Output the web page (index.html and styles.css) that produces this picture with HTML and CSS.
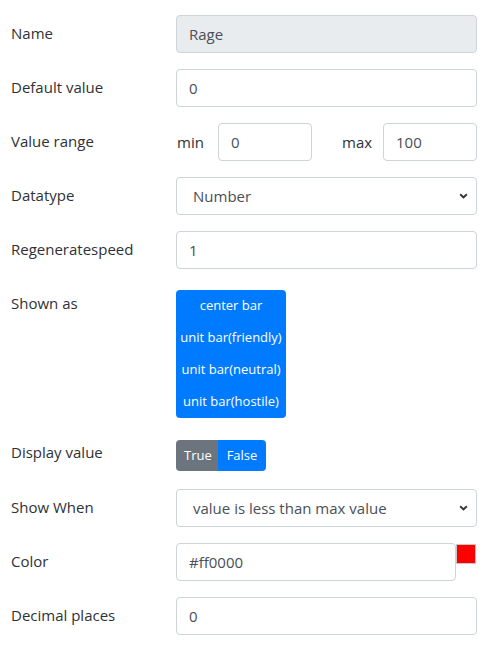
FILE: index.html
```html
<!DOCTYPE html>
<html>
<head>
<meta charset="utf-8">
<link rel="stylesheet" href="styles.css">
</head>
<body>
<div class="form">
  <div class="row">
    <label class="label">Name</label>
    <div class="field"><div class="input readonly">Rage</div></div>
  </div>
  <div class="row">
    <label class="label">Default value</label>
    <div class="field"><div class="input">0</div></div>
  </div>
  <div class="row">
    <label class="label">Value range</label>
    <div class="field range">
      <div class="half"><span class="sub">min</span><div class="input">0</div></div>
      <div class="half"><span class="sub">max</span><div class="input">100</div></div>
    </div>
  </div>
  <div class="row">
    <label class="label">Datatype</label>
    <div class="field">
      <div class="input select">
        <span>Number</span>
        <svg class="chev" width="9" height="6" viewBox="0 0 9 6"><path d="M1.2 1.2 L4.5 4.4 L7.8 1.2" fill="none" stroke="#333" stroke-width="1.9"/></svg>
      </div>
    </div>
  </div>
  <div class="row">
    <label class="label">Regeneratespeed</label>
    <div class="field"><div class="input">1</div></div>
  </div>
  <div class="row">
    <label class="label">Shown as</label>
    <div class="field">
      <div class="vgroup">
        <div class="btn blue">center bar</div>
        <div class="btn blue">unit bar(friendly)</div>
        <div class="btn blue">unit bar(neutral)</div>
        <div class="btn blue">unit bar(hostile)</div>
      </div>
    </div>
  </div>
  <div class="row row-display">
    <label class="label">Display value</label>
    <div class="field">
      <div class="hgroup">
        <div class="btn gray">True</div>
        <div class="btn blue">False</div>
      </div>
    </div>
  </div>
  <div class="row">
    <label class="label">Show When</label>
    <div class="field">
      <div class="input select">
        <span>value is less than max value</span>
        <svg class="chev" width="9" height="6" viewBox="0 0 9 6"><path d="M1.2 1.2 L4.5 4.4 L7.8 1.2" fill="none" stroke="#333" stroke-width="1.9"/></svg>
      </div>
    </div>
  </div>
  <div class="row">
    <label class="label">Color</label>
    <div class="field color">
      <div class="input">#ff0000</div>
      <div class="swatch"></div>
    </div>
  </div>
  <div class="row">
    <label class="label">Decimal places</label>
    <div class="field"><div class="input">0</div></div>
  </div>
</div>
</body>
</html>
```
FILE: styles.css
```css
* { box-sizing: border-box; }
html, body { margin: 0; padding: 0; background: #fff; }
body {
  font-family: "Open Sans", Lato, sans-serif;
  font-size: 15px;
  color: #2e3236;
  line-height: 1.5;
}
.form {
  padding: 15px 0 0 11px;
}
.row {
  display: grid;
  grid-template-columns: 165px 301px;
  margin-bottom: 16px;
}
.label {
  padding: 6px 0 8px;
  line-height: 24px;
  display: block;
}
.input {
  height: 38px;
  border: 1px solid #ced4da;
  border-radius: 4px;
  padding: 6px 12px;
  line-height: 24px;
  color: #495057;
  background: #fff;
}
.readonly { background: #e9ecef; }
.select {
  display: flex;
  align-items: center;
  justify-content: space-between;
  padding-left: 16px;
  padding-right: 8px;
}
.chev { display: block; }
.range {
  display: grid;
  grid-template-columns: 136px 136px;
  column-gap: 29px;
}
.half {
  display: grid;
  grid-template-columns: 42px 1fr;
  align-items: center;
}
.sub { line-height: 24px; padding-left: 1px; }
.vgroup {
  margin-top: 5px;
  width: 110px;
  display: flex;
  flex-direction: column;
  border-radius: 4px;
  overflow: hidden;
}
.btn {
  font-size: 13px;
  line-height: 21px;
  padding: 5px 4px 6px;
  text-align: center;
  color: #fff;
  white-space: nowrap;
}
.blue { background: #007bff; }
.gray { background: #6c757d; }
.row-display .label { padding-bottom: 9px; }
.hgroup {
  margin-top: 6px;
  display: inline-flex;
  border-radius: 4px;
  overflow: hidden;
}
.hgroup .btn { padding: 5px 8px; }
.hgroup .gray { width: 42px; }
.hgroup .blue { width: 48px; }
.color {
  display: flex;
  align-items: flex-start;
}
.color .input { width: 280px; }
.swatch {
  margin-top: 1px;
  width: 20px;
  height: 20px;
  background: #ff0000;
  border: 1px solid #c8c8c8;
}
```
